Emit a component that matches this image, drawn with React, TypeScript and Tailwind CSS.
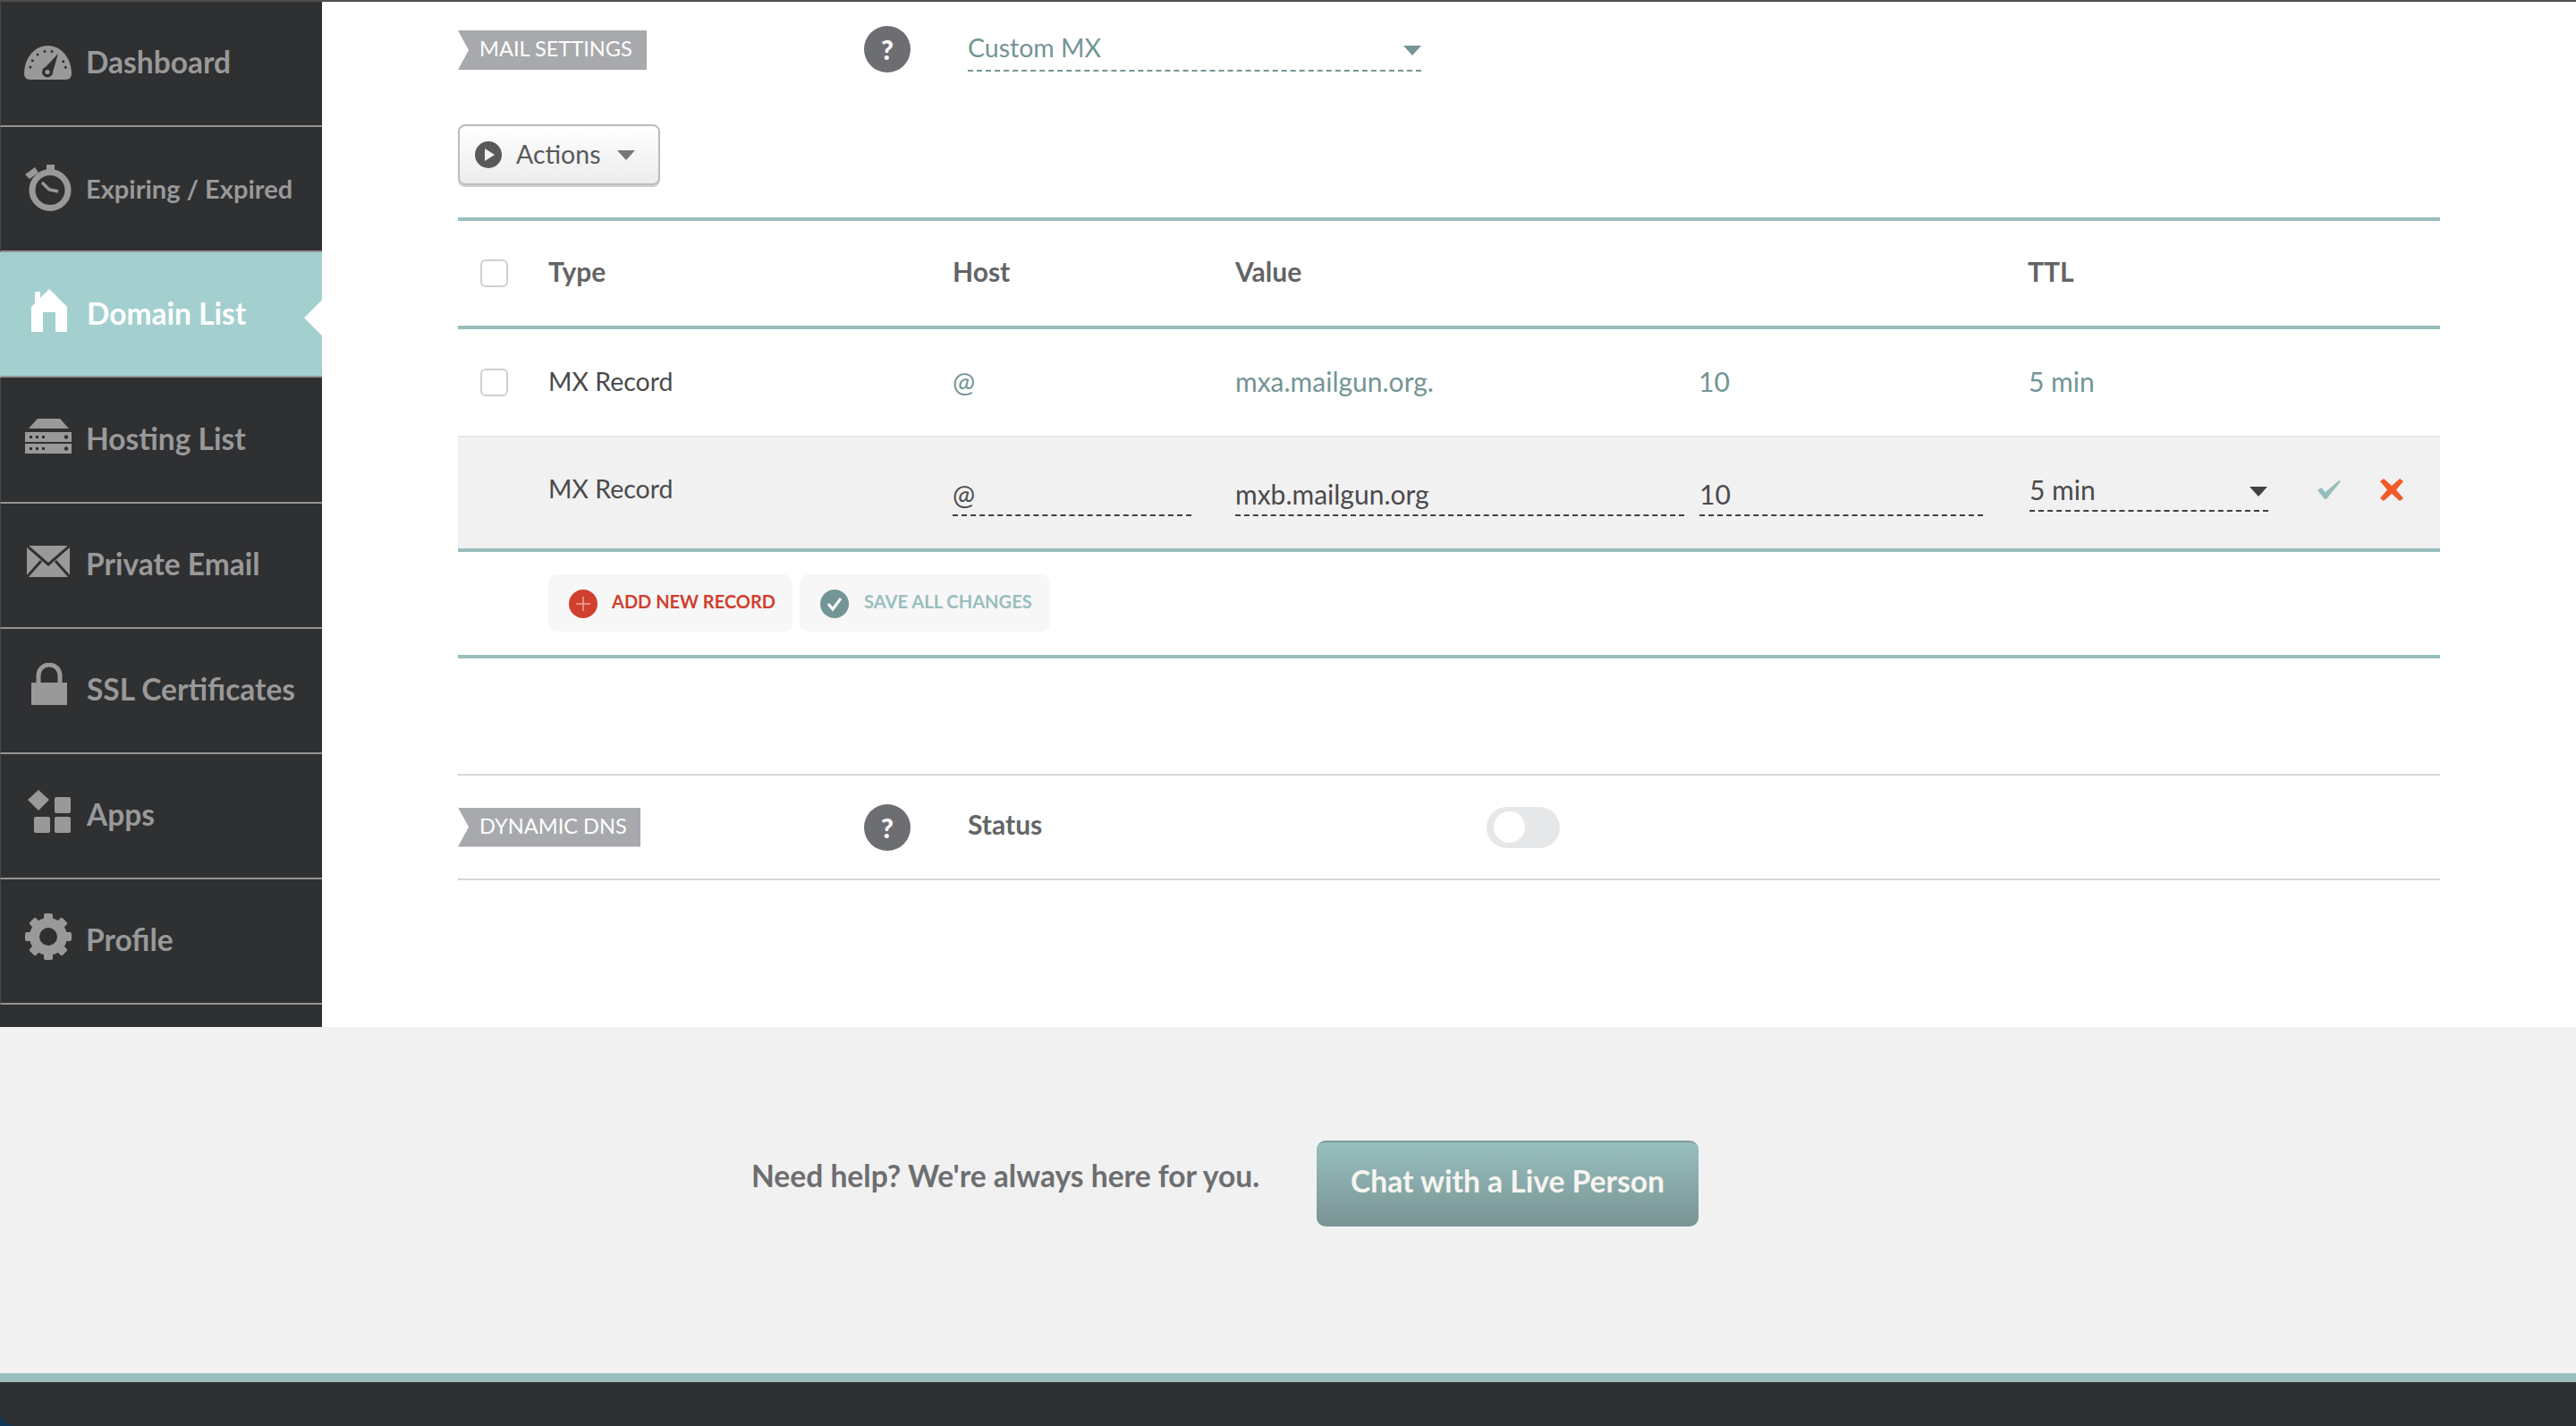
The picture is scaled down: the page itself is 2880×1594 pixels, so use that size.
import React from "react";

const G = "#999999";
const D = "#2f3032";

function GaugeIcon() {
  return (
    <svg width="53" height="38" viewBox="0 0 53 38">
      <path d="M0 32C0 14 11.5 0 26.5 0S53 14 53 32a6 6 0 0 1-6 6H6a6 6 0 0 1-6-6z" fill={G} />
      {[[7, 24], [9.3, 16.7], [15, 10], [23, 6.5], [31, 6.5], [43.7, 17.7], [46.3, 24.3]].map(([x, y], i) => (
        <circle key={i} cx={x} cy={y} r="1.5" fill={D} />
      ))}
      <path d="M38 9 L31 33 L21 27 Z" fill={D} />
      <circle cx="26" cy="29.5" r="6" fill={D} />
      <circle cx="26" cy="29.5" r="2.6" fill={G} />
    </svg>
  );
}
function TimerIcon() {
  return (
    <svg width="52" height="52" viewBox="0 0 52 52">
      <circle cx="28" cy="28.5" r="20" fill="none" stroke={G} strokeWidth="7" />
      <rect x="24" y="0" width="9" height="9" fill={G} />
      <path d="M0 11 L11 3 L15 9 L5 16 Z" fill={G} />
      <path d="M19 20 L27 28 L37 30" fill="none" stroke={G} strokeWidth="3.5" />
    </svg>
  );
}
function HouseIcon() {
  return (
    <svg width="40" height="48" viewBox="0 0 40 48">
      <path d="M20 0L40 20V48H27V26H13V48H0V20L4 16V3H10V10Z" fill="#ffffff" />
    </svg>
  );
}
function ServerIcon() {
  return (
    <svg width="52" height="39" viewBox="0 0 52 39">
      <path d="M14 0H39L49 11H4Z" fill={G} />
      <rect x="0" y="15" width="52" height="11" fill={G} />
      <rect x="0" y="28" width="52" height="11" fill={G} />
      {[19, 32].map((y) => (
        <g key={y} fill={D}>
          <rect x="5" y={y} width="3" height="3" />
          <rect x="12" y={y} width="3" height="3" />
          <rect x="19" y={y} width="3" height="3" />
          <circle cx="46" cy={y + 1.5} r="2.2" />
        </g>
      ))}
    </svg>
  );
}
function MailIcon() {
  return (
    <svg width="48" height="35" viewBox="0 0 48 35">
      <rect width="48" height="35" fill={G} />
      <path d="M0 0L24 21L48 0" fill="none" stroke={D} strokeWidth="3" />
      <path d="M0 35L16 17M48 35L32 17" fill="none" stroke={D} strokeWidth="3" />
    </svg>
  );
}
function LockIcon() {
  return (
    <svg width="40" height="47" viewBox="0 0 40 47">
      <path d="M8 24V14a12 12 0 0 1 24 0v10" fill="none" stroke={G} strokeWidth="5" />
      <rect x="0" y="22" width="40" height="25" fill={G} />
    </svg>
  );
}
function AppsIcon() {
  return (
    <svg width="48" height="48" viewBox="0 0 48 48">
      <path d="M12 0L24 11L12 23L0 11Z" fill={G} />
      <rect x="30" y="8" width="18" height="18" rx="2" fill={G} />
      <rect x="7" y="30" width="18" height="18" rx="2" fill={G} />
      <rect x="30" y="30" width="18" height="18" rx="2" fill={G} />
    </svg>
  );
}
function GearIcon() {
  const teeth = [0, 45, 90, 135, 180, 225, 270, 315];
  return (
    <svg width="52" height="52" viewBox="0 0 52 52">
      {teeth.map((a) => (
        <rect key={a} x="21" y="0" width="10" height="12" rx="2" fill={G} transform={`rotate(${a} 26 26)`} />
      ))}
      <circle cx="26" cy="26" r="15.5" fill="none" stroke={G} strokeWidth="11" />
    </svg>
  );
}

function NavItem({
  label,
  icon,
  active,
  shift = "",
  textClass = "text-[33.5px]",
}: {
  label: string;
  icon: React.ReactNode;
  active?: boolean;
  shift?: string;
  textClass?: string;
}) {
  return (
    <div
      className={
        "relative flex h-[140.14px] shrink-0 items-center border-b-2 border-l border-b-[#949494] pb-[2px] " +
        (active ? "border-l-[#a3cfcf] bg-[#a3cfcf] text-white" : "border-l-[#454648] text-[#999999]")
      }
    >
      <div className={"flex w-[95px] shrink-0 items-center justify-center pl-[10px] " + shift}>{icon}</div>
      <span className={"whitespace-nowrap font-bold leading-none " + textClass}>{label}</span>
      {active ? (
        <span className="absolute right-0 top-[53px] h-[40px] w-[20px] bg-white [clip-path:polygon(100%_0,100%_100%,0_50%)]" />
      ) : null}
    </div>
  );
}

function Tag({ text, w }: { text: string; w: string }) {
  return (
    <div
      className={
        "flex h-[44px] shrink-0 items-center whitespace-nowrap bg-[#a7a9ac] pb-[2px] pl-[24px] text-[23.6px] leading-none text-white [clip-path:polygon(0_0,100%_0,100%_100%,0_100%,12px_50%)] " +
        w
      }
    >
      {text}
    </div>
  );
}

function Help() {
  return (
    <div className="flex h-[52px] w-[52px] shrink-0 items-center justify-center rounded-full bg-[#6d6e71] text-[30px] font-black leading-none text-white">
      ?
    </div>
  );
}

function Checkbox() {
  return <div className="h-[31px] w-[31px] rounded-[6px] border-2 border-[#cfcfcf] bg-white" />;
}

function Caret({ color }: { color: string }) {
  return (
    <svg width="20" height="11" viewBox="0 0 20 11" className="block shrink-0">
      <path d="M0 0H20L10 11Z" fill={color} />
    </svg>
  );
}

export default function App() {
  return (
    <div className="flex h-[1594px] w-[2880px] flex-col overflow-hidden bg-[#12355b] font-['Lato',sans-serif]">
      <div className="h-[2px] shrink-0 bg-[#4d4d4d]" />
      <div className="flex h-[1146px] shrink-0">
        <aside className="w-[360px] shrink-0 overflow-hidden bg-[#2f3032]">
          <NavItem label="Dashboard" icon={<GaugeIcon />} />
          <NavItem label="Expiring / Expired" icon={<TimerIcon />} textClass="text-[29px]" />
          <NavItem label="Domain List" icon={<HouseIcon />} active shift="mb-[6px] ml-[1px]" />
          <NavItem label="Hosting List" icon={<ServerIcon />} shift="mb-[6px]" />
          <NavItem label="Private Email" icon={<MailIcon />} shift="mb-[6px]" />
          <NavItem label="SSL Certificates" icon={<LockIcon />} shift="mb-[12px] ml-[1px]" />
          <NavItem label="Apps" icon={<AppsIcon />} shift="mb-[8px] ml-[1px]" />
          <NavItem label="Profile" icon={<GearIcon />} shift="mb-[8px]" />
        </aside>
        <main className="flex-1 bg-white pl-[152px] pr-[152px] pt-[27px]">
          <div className="flex h-[52px] items-center">
            <div className="mt-[2px]">
              <Tag text="MAIL SETTINGS" w="w-[211px]" />
            </div>
            <div className="ml-[243px]">
              <Help />
            </div>
            <div className="ml-[64px] flex h-[51px] w-[507px] items-center justify-between self-start border-b-2 border-dashed border-[#739595] pb-[1px] text-[28.5px] leading-none text-[#739595]">
              <span>Custom MX</span>
              <span className="mt-[6px]">
                <Caret color="#739595" />
              </span>
            </div>
          </div>

          <div className="mt-[58px] flex h-[68px] w-[226px] items-center rounded-[8px] border-2 border-[#bcbcbc] bg-gradient-to-b from-white to-[#ececec] pb-[2px] pl-[17px] text-[28.5px] leading-none text-[#58595b] shadow-[0_2px_0_#cfcfcf]">
            <svg width="30" height="30" viewBox="0 0 30 30" className="mt-[2px] shrink-0">
              <circle cx="15" cy="15" r="15" fill="#58595b" />
              <path d="M11 8L22 15L11 22Z" fill="#f1f1f1" />
            </svg>
            <span className="ml-[16px]">Actions</span>
            <span className="ml-[19px] mt-[2px]">
              <Caret color="#777777" />
            </span>
          </div>

          <div className="mt-[36px] border-t-4 border-[#97bebd]">
            <div className="flex h-[121px] items-center border-b-4 border-[#97bebd] text-[30px] font-bold leading-none text-[#636466]">
              <div className="w-[101px] pl-[25px]">
                <Checkbox />
              </div>
              <div className="w-[452px] pb-[6px]">Type</div>
              <div className="w-[316px] pb-[6px]">Host</div>
              <div className="w-[886px] pb-[6px]">Value</div>
              <div className="pb-[6px]">TTL</div>
            </div>
            <div className="flex h-[119px] items-center text-[30px] leading-none text-[#739595]">
              <div className="w-[101px] pl-[25px]">
                <Checkbox />
              </div>
              <div className="w-[452px] pb-[2px] text-[28.5px] text-[#4a4a4c]">MX Record</div>
              <div className="w-[316px] pb-[4px]">@</div>
              <div className="w-[518px] pb-[4px]">mxa.mailgun.org.</div>
              <div className="w-[369px] pb-[4px]">10</div>
              <div className="pb-[4px]">5 min</div>
            </div>
            <div className="flex h-[126px] items-start border-t-2 border-[#e8e8e8] bg-[#f1f1f1] text-[30px] leading-none text-[#4a4a4c]">
              <div className="w-[101px]" />
              <div className="mt-[43px] w-[452px] text-[28.5px]">MX Record</div>
              <div className="w-[316px]">
                <div className="mt-[48px] h-[40px] w-[267px] border-b-2 border-dashed border-[#414042]">@</div>
              </div>
              <div className="w-[519px]">
                <div className="mt-[48px] h-[40px] w-[502px] border-b-2 border-dashed border-[#414042]">mxb.mailgun.org</div>
              </div>
              <div className="w-[369px]">
                <div className="mt-[48px] h-[40px] w-[317px] border-b-2 border-dashed border-[#414042]">10</div>
              </div>
              <div className="mt-[43px] flex h-[40px] w-[267px] items-start justify-between border-b-2 border-dashed border-[#414042]">
                <span>5 min</span>
                <span className="mr-[1px] mt-[12px]">
                  <Caret color="#414042" />
                </span>
              </div>
              <svg width="26" height="21" viewBox="0 0 26 21" className="ml-[55px] mt-[48px]">
                <path d="M0 11L4 8L9 13L24 0L26 1L10 21H8Z" fill="#97bebd" />
              </svg>
              <svg width="26" height="25" viewBox="0 0 26 25" className="ml-[44px] mt-[46px]">
                <path d="M0 3L4 0L13 8L22 0L26 3L18 12.5L26 22L22 25L13 17L4 25L0 22L8 12.5Z" fill="#f15a29" />
              </svg>
            </div>
            <div className="flex h-[123px] items-start border-y-4 border-[#97bebd] pl-[101px] pt-[25px]">
              <div className="flex h-[64px] w-[273px] items-center whitespace-nowrap rounded-[10px] bg-[#f7f7f7] pl-[23px] text-[20px] font-bold leading-none text-[#d13f2e]">
                <svg width="32" height="32" viewBox="0 0 32 32" className="mr-[16px] mt-[2px] shrink-0">
                  <circle cx="16" cy="16" r="16" fill="#d1402e" />
                  <path d="M16 8V24M8 16H24" stroke="#f0a79c" strokeWidth="1.5" />
                </svg>
                <span className="pb-[4px]">ADD NEW RECORD</span>
              </div>
              <div className="ml-[8px] flex h-[64px] w-[280px] items-center whitespace-nowrap rounded-[10px] bg-[#f7f7f7] pl-[23px] text-[20.1px] font-bold leading-none text-[#97bebd]">
                <svg width="32" height="32" viewBox="0 0 32 32" className="mr-[17px] mt-[2px] shrink-0">
                  <circle cx="16" cy="16" r="16" fill="#739595" />
                  <path d="M9 16L14 22L23 10" fill="none" stroke="#ffffff" strokeWidth="3" />
                </svg>
                <span className="pb-[4px]">SAVE ALL CHANGES</span>
              </div>
            </div>
          </div>

          <div className="mt-[129px] flex h-[119px] items-center border-y-2 border-[#d6d6d6]">
            <Tag text="DYNAMIC DNS" w="w-[204px]" />
            <div className="ml-[250px]">
              <Help />
            </div>
            <div className="ml-[64px] w-[580px] pb-[7px] text-[30px] font-bold leading-none text-[#636466]">Status</div>
            <div className="flex h-[46px] w-[82px] items-center rounded-full bg-[#e6e7e8] pl-[8px]">
              <div className="h-[35px] w-[35px] rounded-full bg-white" />
            </div>
          </div>
        </main>
      </div>

      <section className="flex h-[387px] shrink-0 items-start bg-[#f1f1f1] pl-[840px] pt-[127px]">
        <div className="mt-[23px] w-[632px] text-[33.6px] font-bold leading-none text-[#6d6e71]">Need help? We're always here for you.</div>
        <div className="flex h-[96px] w-[427px] items-center justify-center rounded-[10px] border-t-2 border-[#7a9a9a] bg-gradient-to-b from-[#97bfbf] to-[#7a9494] pb-[6px] text-[33.6px] font-bold leading-none text-[#f7f5f0]">
          Chat with a Live Person
        </div>
      </section>
      <div className="h-[10px] shrink-0 bg-[#97bebd]" />
      <div className="h-[49px] shrink-0 rounded-bl-[18px] bg-[#2f3032]" />
    </div>
  );
}
